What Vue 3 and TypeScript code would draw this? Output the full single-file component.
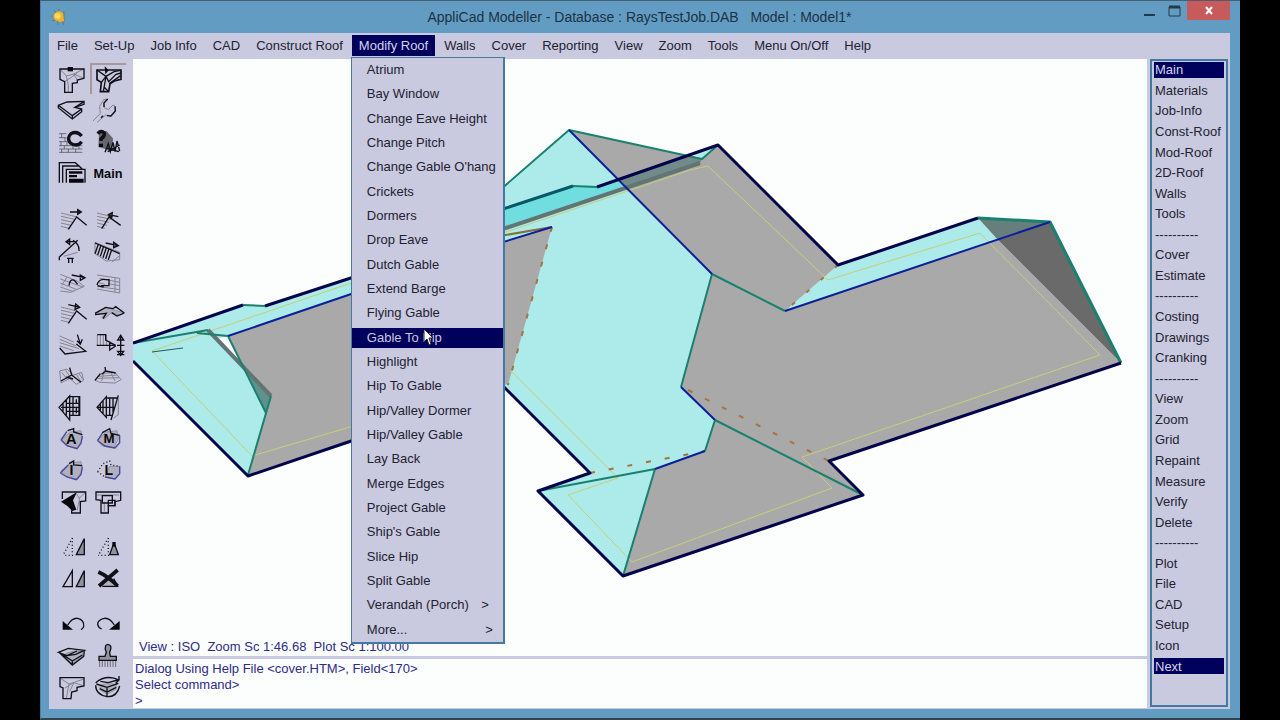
<script setup lang="ts">
import { ref } from 'vue'

interface Stroke { d: string; k?: string }
interface Glyph { name: string; strokes: Stroke[]; text?: string; tx?: number; ty?: number; size?: number }

const menus: string[] = ['File', 'Set-Up', 'Job Info', 'CAD', 'Construct Roof', 'Modify Roof', 'Walls', 'Cover', 'Reporting', 'View', 'Zoom', 'Tools', 'Menu On/Off', 'Help']
const openMenu = ref('Modify Roof')
const roofItems: string[] = ['Atrium', 'Bay Window', 'Change Eave Height', 'Change Pitch', "Change Gable O'hang", 'Crickets', 'Dormers', 'Drop Eave', 'Dutch Gable', 'Extend Barge', 'Flying Gable', 'Gable To Hip', 'Highlight', 'Hip To Gable', 'Hip/Valley Dormer', 'Hip/Valley Gable', 'Lay Back', 'Merge Edges', 'Project Gable', "Ship's Gable", 'Slice Hip', 'Split Gable', 'Verandah (Porch)', 'More...']
const hovered = ref('Gable To Hip')
const hasSub = (s: string): boolean => s === 'Verandah (Porch)' || s === 'More...'

const sep = '----------'
const side: string[] = ['Main', 'Materials', 'Job-Info', 'Const-Roof', 'Mod-Roof', '2D-Roof', 'Walls', 'Tools', sep, 'Cover', 'Estimate', sep, 'Costing', 'Drawings', 'Cranking', sep, 'View', 'Zoom', 'Grid', 'Repaint', 'Measure', 'Verify', 'Delete', sep, 'Plot', 'File', 'CAD', 'Setup', 'Icon', 'Next']
const command = ref('')

// Stroke kinds: b thin black, B heavy black, g grey, f black fill, s grey fill, n navy, d dotted
const rowsOfGrey = 'M12 27L60 39M12 37L54 46M12 47L48 55M12 57L42 64M12 67L36 73'
const polyRoof = 'M40 24L72 20L76 44L62 72L28 66L12 48Z'
const tee = 'M9 15H81V43L61 48V56L46 58V85H23V53L9 46Z'
const groups: Glyph[][] = [
  [
    { name: 'Roof plan', strokes: [{ d: 'M9 15L28 36L34 64L34 85M28 36L50 30L61 48M50 30L81 15M23 53L40 42L60 28M50 30L81 43', k: 'g' }, { d: tee, k: 'b' }, { d: 'M32 9H48V22H32Z', k: 'f' }] },
    { name: 'Roof edges', strokes: [{ d: 'M9 15H81V43L61 48L48 56L44 80H19L22 52L9 44Z', k: 'B' }, { d: 'M9 15L36 34L28 80M36 34L60 20L80 16M36 34L44 50L66 28L81 24M22 52L36 34M46 56L80 32M30 66L42 78', k: 'b' }, { d: 'M32 4L44 16L34 28Z', k: 'f' }] },
    { name: 'Surface', strokes: [{ d: 'M4 31L30 21L81 19V28L54 37L74 42V50L46 72L4 38Z', k: 'b' }, { d: 'M4 31L46 62L74 42M46 62V72M54 37L81 20', k: 'b' }] },
    { name: 'Wrench', strokes: [{ d: 'M0 78L22 55L20 34L32 14L44 12L32 24L34 38L46 44L60 30L67 34L67 48L54 63L38 60L12 82', k: 'g' }, { d: 'M44 12L33 24V36M66 34L67 48L54 63L42 62M30 62L24 68', k: 'b' }] },
    { name: 'Bricks', strokes: [{ d: 'M6 20H28M6 32H28M6 44H32M6 56H76M6 66H76M6 76H76M14 20V32M24 32V44M12 44V56M30 44V56M48 56V66M22 56V66M66 56V66M34 66V76M56 66V76M14 66V76', k: 'm' }, { d: 'M74 27Q60 10 42 20Q28 34 40 48Q60 62 74 44', k: 'C' }] },
    { name: 'Query', strokes: [{ d: 'M18 18L40 12L60 34L58 72L16 60Z', k: 'q' }, { d: 'M36 76L46 50L52 74L60 46L66 74L72 42L80 72M40 64L78 74M44 74L80 54', k: 'b' }, { d: 'M14 20Q24 8 34 18Q36 28 24 36V42', k: 'C' }, { d: 'M18 50H30V60H18Z', k: 'f' }] },
    { name: 'Layers', strokes: [{ d: 'M7 74V14H55L66 24M17 74V24H66L76 34M28 74V34H84V74', k: 'b' }, { d: 'M36 40H76V47H36ZM36 51H60V58H36ZM36 62H80V74H36Z', k: 'f' }] },
    { name: 'Main', strokes: [], text: 'Main', tx: 45, ty: 60, size: 38 }
  ],
  [
    { name: 'Slope right', strokes: [{ d: rowsOfGrey, k: 'g' }, { d: 'M34 76L59 39L89 64M39 24H73M62 17L73 24L62 31Z', k: 'b' }] },
    { name: 'Slope left', strokes: [{ d: rowsOfGrey, k: 'g' }, { d: 'M26 74L48 39L83 64M76 38L46 32M58 26L46 32L56 41Z', k: 'b' }] },
    { name: 'Pitch', strokes: [{ d: 'M7 76V66L62 16M27 20H54M38 12L27 20L38 28ZM48 16Q68 28 66 48M30 70H50M35 70V84M46 70V84', k: 'b' }, { d: 'M20 64L62 52', k: 'g' }] },
    { name: 'Sheets', strokes: [{ d: 'M6 22L80 52V74L40 78L6 56ZM56 82L80 62', k: 'g' }, { d: 'M6 56L16 28M14 60L24 31M22 64L32 34M30 68L40 38M38 72L48 41M46 74L56 44M38 24L76 32M62 22L76 32L62 38Z', k: 'b' }, { d: 'M6 24L80 56', k: 'b' }] },
    { name: 'Rotate right', strokes: [{ d: 'M10 22L60 42L82 58L40 76L10 72M10 36L78 60M10 48L60 68M10 60L50 74M30 30L14 56', k: 'g' }, { d: 'M36 56Q38 34 52 40L62 52M44 24L84 32M70 24L84 32L70 40Z', k: 'b' }] },
    { name: 'Rotate left', strokes: [{ d: 'M12 24L80 34V78L12 66M20 34L80 46M46 50L80 56M12 58L80 68M12 46L36 52M66 30V76', k: 'g' }, { d: 'M12 54Q18 34 38 38M14 56L32 60M38 38H48V56H24', k: 'b' }] },
    { name: 'Raise', strokes: [{ d: rowsOfGrey, k: 'g' }, { d: 'M34 76L59 39L89 64M34 20L68 28M56 18L68 28L54 34Z', k: 'b' }] },
    { name: 'Valley plan', strokes: [{ d: 'M6 50L38 28L94 45L80 52L56 44L34 62L26 58L40 46Z', k: 's' }, { d: 'M6 46L38 28L60 32L68 26L94 45M6 50L40 46L30 62M56 44L72 54L94 45', k: 'b' }] },
    { name: 'Drop', strokes: [{ d: 'M8 18L50 36M8 28L58 48M8 38L66 56M8 48L50 62', k: 'g' }, { d: 'M8 54L24 72L86 64L58 42M61 14L70 42M60 32L70 42L76 28', k: 'b' }] },
    { name: 'Height', strokes: [{ d: 'M13 14H40V46M13 14V46M22 14V46M31 14V46', k: 'g' }, { d: 'M13 14H38V30L68 46H11M50 34V60L68 48M72 46H94M72 74H94M83 18V76M74 30L83 16L92 30ZM74 64L83 76L92 64Z', k: 'b' }] },
    { name: 'Hip', strokes: [{ d: 'M8 30L30 24L50 42L74 34L80 58L58 70L38 52L12 66ZM14 34L34 58M26 28L40 50M58 40L72 62M66 38L78 56', k: 'g' }, { d: 'M38 20L44 42L12 60M44 42L72 64M28 48L48 54', k: 'b' }] },
    { name: 'Dormer', strokes: [{ d: 'M6 58L24 38L66 34L84 56L66 66L20 64ZM18 46L72 42M14 52L78 50M34 28L26 60M52 32L66 60', k: 'g' }, { d: 'M36 18L38 30L26 40M38 30L68 36M6 58L22 38', k: 'b' }] },
    { name: 'Wall grid', strokes: [{ d: 'M6 46L38 12V84ZM38 14H68V70H38M18 34V60M28 24V70M12 46H68M28 34H68M28 58H68M48 14V70M58 22V34M58 46V64M66 14V70', k: 'b' }] },
    { name: 'Wall cut', strokes: [{ d: 'M12 46L40 14V76ZM40 18H76M40 70H60M22 36V58M30 26V66M12 46H66M50 18V70M60 18V62M76 10L54 84', k: 'b' }, { d: 'M76 20V68L62 78', k: 'g' }] },
    { name: 'Area A', strokes: [{ d: polyRoof, k: 's' }, { d: 'M12 48L30 22M76 36L72 58L60 74L32 66L12 48', k: 'n' }, { d: 'M32 20L50 14V24L76 32', k: 'b' }], text: 'A', tx: 43, ty: 61, size: 44 },
    { name: 'Area M', strokes: [{ d: polyRoof, k: 's' }, { d: 'M14 50L30 24M80 34V56L66 72L36 66L14 50', k: 'n' }, { d: 'M28 26L50 14L54 28L80 34', k: 'b' }], text: 'M', tx: 48, ty: 58, size: 40 },
    { name: 'Area I', strokes: [{ d: polyRoof, k: 's' }, { d: 'M10 54L34 30M76 36L72 58L58 74L30 66L10 54', k: 'n' }, { d: 'M36 26L50 18V30L76 32', k: 'b' }], text: 'I', tx: 43, ty: 60, size: 42 },
    { name: 'Area L', strokes: [{ d: 'M50 34L80 34V56L66 72L36 66Z', k: 's' }, { d: 'M80 34V56L66 72L36 66', k: 'n' }, { d: 'M14 50L30 26L50 18L54 30L80 34M14 50L36 66', k: 'd' }], text: 'L', tx: 47, ty: 61, size: 42 },
    { name: 'Fill roof', strokes: [{ d: 'M58 20L68 36L60 70M86 16L66 34', k: 'g' }, { d: 'M16 36V15H86V42L70 44V78H44V70', k: 'b' }, { d: 'M12 44L60 15L48 40L58 68L46 72L32 58Z', k: 'f' }] },
    { name: 'Outline roof', strokes: [{ d: 'M12 24H78M34 44V74', k: 'g' }, { d: 'M9 15H83V40L66 44V56H46V78H24V40L9 38Z', k: 'b' }, { d: 'M28 26H58V48H28ZM46 40H66V56H46Z', k: 'b' }] }
  ],
  [
    { name: 'Mirror dotted', strokes: [{ d: 'M46 18L18 70M46 18V70H18', k: 'd' }, { d: 'M58 68L82 20V68Z', k: 't' }] },
    { name: 'Mirror small', strokes: [{ d: 'M46 18L16 70M46 18V70H16', k: 'd' }, { d: 'M50 68L60 40H66L76 68Z', k: 't' }, { d: 'M58 30H68V44H58Z', k: 'f' }] },
    { name: 'Mirror', strokes: [{ d: 'M18 68L46 20V68Z', k: 'b' }, { d: 'M58 68L82 20V68Z', k: 't' }] },
    { name: 'Delete shape', strokes: [{ d: 'M28 68L38 48H62L74 68Z', k: 's' }, { d: 'M16 24Q44 36 74 66M74 18L18 66', k: 'X' }, { d: 'M28 67H74L62 44', k: 'b' }] }
  ],
  [
    { name: 'Undo', strokes: [{ d: 'M17 36V62H48Z', k: 'f' }, { d: 'M32 48Q46 26 62 28Q82 32 80 52Q80 58 72 62', k: 'b' }] },
    { name: 'Redo', strokes: [{ d: 'M80 36V62H48Z', k: 'f' }, { d: 'M64 48Q50 26 34 28Q14 32 14 46Q16 56 26 60', k: 'b' }] },
    { name: 'Solid', strokes: [{ d: 'M28 36L52 30L78 32L76 44L46 68L24 52Z', k: 's' }, { d: 'M4 34L34 22L82 28L56 40L30 44ZM6 34L46 72L80 46L82 30M16 40L46 60L76 42M46 60V72M30 44L60 30', k: 'b' }] },
    { name: 'Brush', strokes: [{ d: 'M38 14Q44 6 52 14Q56 20 50 34L52 46H70V58H18V46H36L40 34Q34 24 38 14Z', k: 't' }, { d: 'M20 60V78M28 60V78M36 60V78M44 60V78M52 60V78M60 60V78M68 60V78', k: 'm' }] },
    { name: 'Plan', strokes: [{ d: 'M12 20L36 36L28 78M36 36L78 22M24 48L50 32L76 40M38 58L50 34', k: 'g' }, { d: 'M9 17H81V42L60 46V56L44 60L42 80H18V48L9 44Z', k: 'b' }] },
    { name: 'Orbit', strokes: [{ d: 'M20 40L44 34L70 38L66 54L42 66L22 54Z', k: 's' }, { d: 'M8 32Q40 6 78 24L68 34M78 24V12M80 42Q72 76 42 74Q8 68 8 40M10 36L42 46L76 34M22 28L46 32L74 24M20 50L42 60L70 46M42 46V72', k: 'b' }] }
  ]
]
const activeTool = ref('Roof edges')
</script>

<template>
  <div class="screen">
    <main class="window">
      <header class="titlebar">
        <svg class="app-icon" viewBox="0 0 18 18" aria-hidden="true">
          <path d="M4 2L6 5M1 8H4M2 13L5 12M9 1V4M8 17V13M14 3V15M12 13L14 17" stroke="#7d7358" stroke-width="1" />
          <path d="M5 5L9 3L13 5L14 13L10 14L5 12L3 8Z" fill="#f2b52a" />
          <path d="M5 6L9 5L11 8L9 11L5 10Z" fill="#ffdc62" />
        </svg>
        <h1>AppliCad Modeller - Database : RaysTestJob.DAB &nbsp; Model : Model1*</h1>
        <div class="caption">
          <button aria-label="Minimise"><svg viewBox="0 0 20 20"><path d="M4 14H15" stroke="#26394a" stroke-width="2" /></svg></button>
          <button aria-label="Maximise"><svg viewBox="0 0 20 20"><path d="M4 6H15V15H4Z" fill="none" stroke="#26394a" /><path d="M4 6H15" stroke="#26394a" stroke-width="3" /></svg></button>
          <button class="close" aria-label="Close"><svg viewBox="0 0 20 20"><path d="M7 6L13 13M13 6L7 13" stroke="#fff" stroke-width="2" /></svg></button>
        </div>
      </header>

      <div class="client">
        <nav class="menubar">
          <div v-for="m in menus" :key="m" class="menu">
            <button :class="{ on: m === openMenu }" @click="openMenu = m">{{ m }}</button>
            <div v-if="m === openMenu && m === 'Modify Roof'" class="dropdown">
              <button v-for="r in roofItems" :key="r" :class="{ hot: r === hovered }" @mouseenter="hovered = r">
                <span>{{ r }}</span><span v-if="hasSub(r)" :class="['sub', { far: r === 'More...' }]">&gt;</span>
                <svg v-if="r === hovered" class="pointer" viewBox="0 0 11 18"><path d="M1 1V14L4 11L6 17L8 16L6 10H10Z" fill="#fff" stroke="#223" stroke-width="1" /></svg>
              </button>
            </div>
          </div>
        </nav>

        <div class="body">
          <aside class="tools">
            <div v-for="(g, gi) in groups" :key="gi" :class="['group', 'g' + gi]">
              <button v-for="t in g" :key="t.name" :aria-label="t.name" :class="{ pressed: t.name === activeTool }" @click="activeTool = t.name">
                <svg viewBox="0 0 90 90">
                  <path v-for="(s, i) in t.strokes" :key="i" :class="'k-' + s.k" :d="s.d" />
                  <text v-if="t.text" :x="t.tx" :y="t.ty" :font-size="t.size" text-anchor="middle">{{ t.text }}</text>
                </svg>
              </button>
            </div>
          </aside>

          <section class="work">
            <div class="canvas">
              <svg class="model" viewBox="133 59 1014 597" preserveAspectRatio="xMinYMin meet" role="img" aria-label="Roof model">
                <g class="cyan">
                  <path d="M133 343L243 305L265 306L360 275V440L248 476L133 361Z" />
                  <path d="M500 190L569 130L712 274L681 387L715 420L705 451L655 469L623 576L538 491L590 473L500 383Z" />
                  <path d="M785 311L838 265L978 218L998 240Z" />
                </g>
                <g class="gray">
                  <path d="M228 336L360 291V438L248 476L266 413Z" />
                  <path d="M569 130L702 159L718 145L838 265L785 311L712 274Z" />
                  <path d="M712 274L785 311L998 240L1121 363L829 461L863 495L623 576L655 469L705 451L715 420L681 387Z" />
                  <path d="M500 243L552 227L508 385L500 383Z" />
                </g>
                <path d="M218 338L228 337L243 367Z" fill="#fcfcfc" />
                <path d="M243 367L271 395L266 413Z" fill="#5f918f" />
                <path d="M978 218L1050 222L998 240Z" fill="#667f7d" />
                <path d="M998 240L1050 222L1121 363Z" fill="#6a6a6a" />
                <path d="M500 210L573 186L597 187L618 178L628 187L500 230Z" fill="#70dede" />
                <path d="M618 178L690 155L702 159L700 163L628 188Z" fill="#708b8a" />
                <path d="M692 154L718 145L702 159Z" fill="#adeaea" />
                <g class="yellow">
                  <path d="M360 280L152 351L252 456L360 424" />
                  <path d="M500 234L690 170L708 166L828 280L980 233L1100 355L802 457L832 488L632 562L568 495L618 478L510 370" />
                </g>
                <g class="brown">
                  <path d="M208 330L271 396M500 230L700 163" />
                </g>
                <path d="M500 236L552 227" stroke="#876f35" stroke-width="2" />
                <g class="dots">
                  <path d="M552 227L508 385" stroke-dasharray="5 13" />
                  <path d="M838 265L785 311" stroke-dasharray="4 15" />
                  <path d="M688 390L829 461" stroke-dasharray="5 14" />
                  <path d="M590 473L705 451" stroke-dasharray="5 14" />
                </g>
                <g class="teal">
                  <path d="M133 343L208 330M197 333L228 336L266 413M248 475L271 396M243 305L265 306M500 190L569 130L702 159L718 145M573 186L597 187M681 387L712 274L785 311M715 420L705 451M863 495L715 420M538 491L655 469L623 576" />
                  <path d="M978 218L1050 222L1121 363" stroke-width="3" />
                </g>
                <path d="M500 210L573 186" stroke="#075866" stroke-width="3" />
                <path class="blue" d="M228 336L360 291M500 243L552 227M569 130L712 274M681 387L715 420M705 451L655 469M785 311L1050 222" />
                <path class="navy" d="M133 343L243 305M265 306L360 275M133 361L248 476L360 438M597 187L718 145L838 265L978 218M500 383L590 473L538 491L623 576L863 495L829 461L1121 363" />
                <path d="M152 352L183 348" stroke="#235c5c" stroke-width="1" />
              </svg>
              <p class="status">View : ISO &nbsp;Zoom Sc 1:46.68 &nbsp;Plot Sc 1:100.00</p>
            </div>
            <div class="console">
              <p>Dialog Using Help File &lt;cover.HTM&gt;, Field&lt;170&gt;</p>
              <p>Select command&gt;</p>
              <div class="prompt"><label for="cmd">&gt;</label><input id="cmd" v-model="command" type="text" /></div>
            </div>
          </section>

          <aside class="side">
            <template v-for="(s, i) in side" :key="i">
              <span v-if="s === sep">{{ s }}</span>
              <button v-else :class="{ on: i === 0 || i === side.length - 1 }">{{ s }}</button>
            </template>
          </aside>
        </div>
      </div>
    </main>
  </div>
</template>

<style>
body { margin: 0; background: #000; }
</style>

<style scoped>
* { box-sizing: border-box; }
.screen { height: 100vh; min-height: 640px; padding: 0 40px; background: #000; font: 13px/16px "Liberation Sans", Arial, sans-serif; color: #23232f; }
button { font: inherit; color: inherit; background: none; border: 0; padding: 0; margin: 0; text-align: left; white-space: nowrap; }
p { margin: 0; }
.window { height: 100%; display: flex; flex-direction: column; background: #629cc2; padding: 0 10px 9px 8px; border-top: 1px solid #46606f; border-bottom: 2px solid #34444c; border-left: 1px solid #4f7f9d; }
.titlebar { position: relative; flex: none; height: 32px; display: flex; align-items: center; justify-content: center; }
.titlebar h1 { margin: 0; font-size: 14px; font-weight: 400; color: #1d3243; }
.app-icon { position: absolute; left: 1px; top: 7px; width: 18px; height: 18px; }
.caption { position: absolute; right: 0; top: 0; display: flex; }
.caption button { width: 25px; height: 19px; display: flex; justify-content: center; }
.caption .close { width: 43px; background: #c75a5b; }
.caption svg { width: 20px; height: 20px; }
.client { flex: 1; min-height: 0; display: flex; flex-direction: column; background: #c9c9e0; }
.menubar { flex: none; height: 26px; display: flex; gap: 2px; padding: 2px 1px 0; }
.menu { position: relative; }
.menu > button { height: 21px; padding: 0 7px; line-height: 22px; }
.menu > button.on { background: #00005c; color: #d4d4ec; }
.dropdown { position: absolute; z-index: 5; top: 22px; left: -1px; width: 154px; height: calc(100vh - 133px); display: flex; flex-direction: column; background: #c9c9e0; border: 1px solid #4379a3; border-right-width: 2px; border-bottom-width: 2px; }
.dropdown button { position: relative; flex: 1 1 0; min-height: 0; display: flex; align-items: center; justify-content: space-between; padding: 0 14px 0 15px; border: 0 solid transparent; border-width: 2px 0; background-clip: padding-box; }
.dropdown .hot { color: #c9c9e0; background-color: #00005c; }
.sub.far { margin-right: -4px; }
.pointer { position: absolute; left: 71px; top: 0; width: 11px; height: 18px; }
.body { flex: 1; min-height: 0; display: flex; }
.tools { flex: none; width: 84px; padding: 4px 7px 6px 5px; display: flex; flex-direction: column; gap: 14px; }
.group { display: grid; grid-template-columns: 1fr 1fr; grid-auto-rows: 1fr; min-height: 0; }
.g0 { flex: 4; }
.g1 { flex: 10; }
.g2 { flex: 2; }
.g3 { flex: 3; }
.group button { display: flex; align-items: center; justify-content: center; min-height: 0; }
.group svg { width: 30px; height: 30px; overflow: visible; }
.group .pressed { border-top: 2px solid #a8979b; border-left: 2px solid #a8979b; }
.group path { fill: none; stroke: #101018; stroke-width: 4; }
.group .k-B { stroke-width: 5; }
.group .k-g { stroke: #85858f; stroke-width: 3; }
.group .k-m { stroke: #3c3c46; stroke-width: 2; }
.group .k-f { fill: #08080c; stroke: none; }
.group .k-s { fill: #b0b0be; stroke: #80808c; stroke-width: 2; }
.group .k-q { fill: #66666e; stroke: none; }
.group .k-t { fill: #92929e; }
.group .k-n { stroke: #4a4a9c; }
.group .k-d { stroke-dasharray: 3 7; }
.group .k-C { stroke-width: 10; }
.group .k-X { stroke-width: 11; }
.group text { font-weight: 700; fill: #08080c; }
.work { flex: 1; min-width: 0; display: flex; flex-direction: column; }
.canvas { position: relative; flex: 1; min-height: 0; background: #fcfdfd; overflow: hidden; }
.model { display: block; width: 100%; height: 100%; }
.model g, .model path { stroke-linejoin: round; }
.cyan { fill: #adeaea; }
.gray { fill: #a9a9a9; }
.yellow { fill: none; stroke: #c6cf78; stroke-width: 1; }
.brown { fill: none; stroke: #627473; stroke-width: 4; }
.dots { fill: none; stroke: #a4743c; stroke-width: 2; }
.teal { fill: none; stroke: #18816f; stroke-width: 2; }
.blue { fill: none; stroke: #0b1f9a; stroke-width: 2; }
.navy { fill: none; stroke: #03034c; stroke-width: 3; }
.status { position: absolute; left: 6px; bottom: 1px; color: #2c2c86; }
.console { flex: none; margin-top: 3px; padding: 2px 2px 0; background: #fcfdfd; color: #2c2c86; margin-bottom: 1px; }
.prompt { display: flex; height: 15px; }
.prompt input { flex: 1; min-width: 0; padding: 0 2px; border: 0; outline: 0; background: none; font: inherit; color: inherit; }
.side { flex: none; width: 78px; margin: 0 2px 2px 3px; padding: 0 2px 27px; display: flex; flex-direction: column; border: 2px solid #4379a3; }
.side > * { flex: 1 1 0; display: flex; align-items: center; padding: 0 1px; min-height: 0; line-height: 15px; border: 0 solid transparent; border-width: 1px 0 4px; background-clip: padding-box; }
.side .on { color: #d4d4ec; background-color: #00005c; }
</style>
